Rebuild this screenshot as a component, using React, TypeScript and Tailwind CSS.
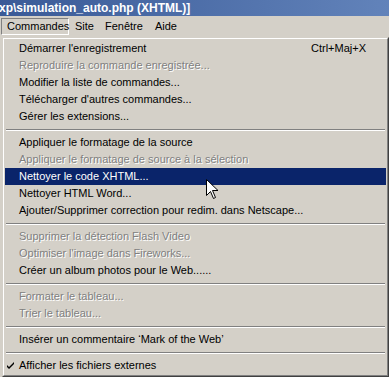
import React from "react";

type Item =
  | { kind: "item"; label: string; disabled?: boolean; shortcut?: string; active?: boolean; checked?: boolean }
  | { kind: "sep" };

const items: Item[] = [
  { kind: "item", label: "Démarrer l'enregistrement", shortcut: "Ctrl+Maj+X" },
  { kind: "item", label: "Reproduire la commande enregistrée...", disabled: true },
  { kind: "item", label: "Modifier la liste de commandes..." },
  { kind: "item", label: "Télécharger d'autres commandes..." },
  { kind: "item", label: "Gérer les extensions..." },
  { kind: "sep" },
  { kind: "item", label: "Appliquer le formatage de la source" },
  { kind: "item", label: "Appliquer le formatage de source à la sélection", disabled: true },
  { kind: "item", label: "Nettoyer le code XHTML...", active: true },
  { kind: "item", label: "Nettoyer HTML Word..." },
  { kind: "item", label: "Ajouter/Supprimer correction pour redim. dans Netscape..." },
  { kind: "sep" },
  { kind: "item", label: "Supprimer la détection Flash Video", disabled: true },
  { kind: "item", label: "Optimiser l'image dans Fireworks...", disabled: true },
  { kind: "item", label: "Créer un album photos pour le Web......" },
  { kind: "sep" },
  { kind: "item", label: "Formater le tableau...", disabled: true },
  { kind: "item", label: "Trier le tableau...", disabled: true },
  { kind: "sep" },
  { kind: "item", label: "Insérer un commentaire ‘Mark of the Web’" },
  { kind: "sep" },
  { kind: "item", label: "Afficher les fichiers externes", checked: true },
];

function Row({ it }: { it: Extract<Item, { kind: "item" }> }) {
  const base = "relative flex items-center h-[17px] pl-[14px] pr-[20px] whitespace-nowrap";
  const color = it.active
    ? "bg-[#0a246a] text-white"
    : it.disabled
    ? "text-[#808080] [text-shadow:1px_1px_0_#ffffff]"
    : "text-black";
  return (
    <div className={`${base} ${color}`}>
      {it.checked && (
        <svg className="absolute left-[2px] top-[5px]" width="8" height="8" viewBox="0 0 8 8">
          <path d="M0 3 L2 5 L7 0 L7 2 L2 7 L0 5 Z" fill="#000" />
        </svg>
      )}
      <span className="flex-1">{it.label}</span>
      {it.shortcut && <span>{it.shortcut}</span>}
    </div>
  );
}

export default function App() {
  return (
    <div className="relative w-[389px] h-[377px] overflow-hidden bg-[#d4d0c8] font-['Liberation_Sans',sans-serif] text-[11px] leading-none">
      <div className="h-[16px] bg-gradient-to-r from-[#3a5a97] to-[#6283ba] text-white font-bold text-[12px] flex items-center whitespace-nowrap -ml-[1px]">
        xp\simulation_auto.php (XHTML)]
      </div>
      <div className="h-[21px] flex items-center text-black">
        <div className="ml-[1px] h-[17px] w-[68px] border-t border-l border-[#808080] border-b-white border-r-white border-b border-r flex items-center pl-[5px]">
          Commandes
        </div>
        <div className="ml-[5px] px-[1px]">Site</div>
        <div className="ml-[10px]">Fenêtre</div>
        <div className="ml-[12px]">Aide</div>
      </div>
      <div className="ml-[2px] w-[387px] border border-t-[#d4d0c8] border-l-[#d4d0c8] border-b-[#404040] border-r-[#404040]">
        <div className="border border-t-white border-l-white border-b-[#808080] border-r-[#808080] p-[1px]">
          {items.map((it, i) =>
            it.kind === "sep" ? (
              <div key={i} className="h-[9px] flex flex-col justify-center px-[1px]">
                <div className="h-[1px] bg-[#808080]" />
                <div className="h-[1px] bg-white" />
              </div>
            ) : (
              <Row key={i} it={it} />
            )
          )}
        </div>
      </div>
      <svg className="absolute left-[206px] top-[179px]" width="13" height="21" viewBox="0 0 13 21">
        <path
          d="M0.5 0.5 L0.5 16.5 L4.5 12.5 L7.5 19.5 L9.5 18.5 L6.5 11.5 L12 11.5 Z"
          fill="#ffffff"
          stroke="#000000"
          strokeWidth="1"
          strokeLinejoin="miter"
        />
      </svg>
    </div>
  );
}
